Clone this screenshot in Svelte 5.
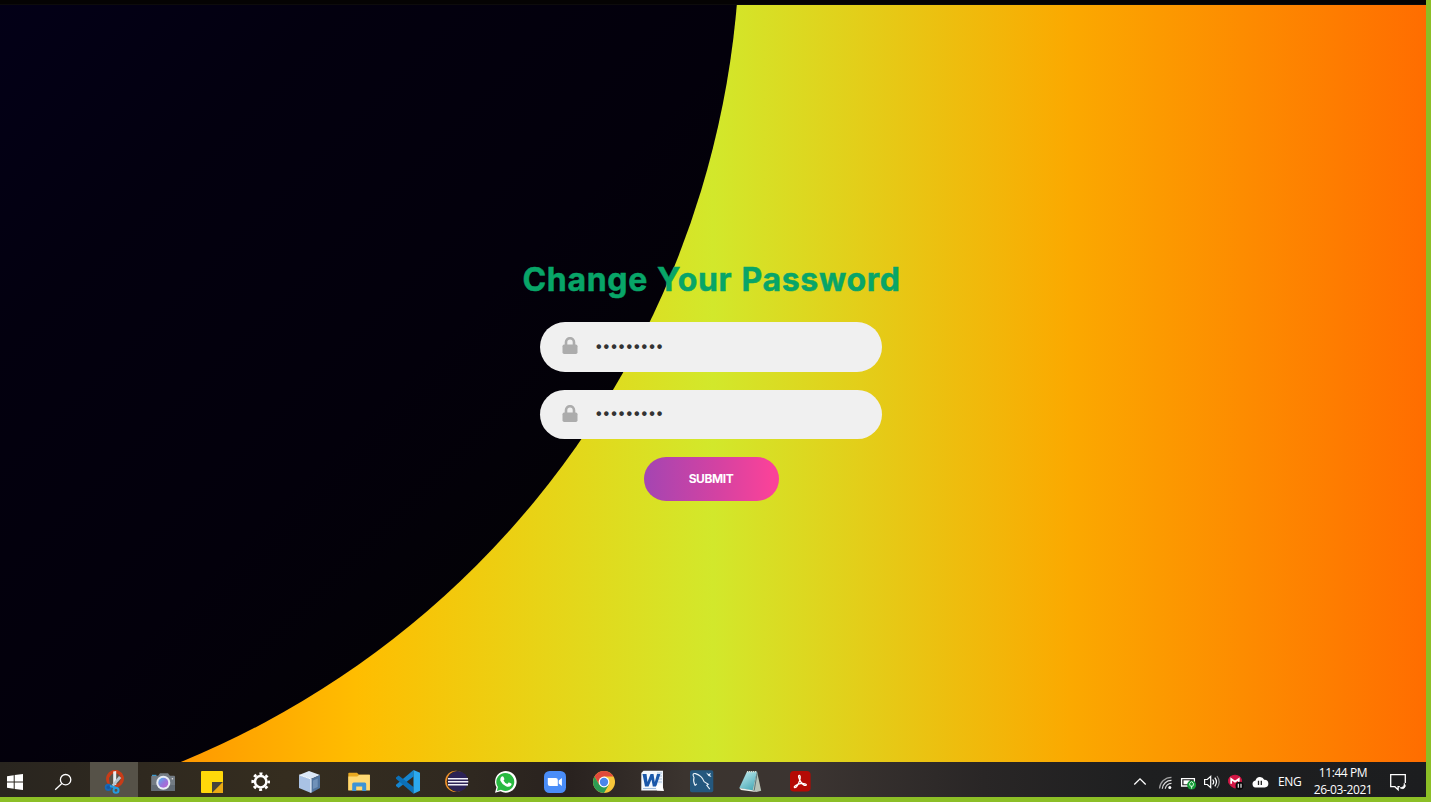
<script>
  let first = $state('password1');
  let second = $state('password1');
</script>

{#snippet lock()}
  <svg class="lock" width="16" height="18" viewBox="0 0 16 18"><rect x="0.5" y="7.5" width="15" height="9.5" rx="1.7" fill="#acacac" /><path d="M4 8V5.2a4 4 0 0 1 8 0V8" fill="none" stroke="#acacac" stroke-width="2.6" /></svg>
{/snippet}

<div class="screen">
  <div class="top"></div>
  <main>
    <div class="circle"></div>
    <form onsubmit={(e) => e.preventDefault()}>
      <h1>Change Your Password</h1>
      <label class="field">{@render lock()}<input type="password" bind:value={first} /></label>
      <label class="field">{@render lock()}<input type="password" bind:value={second} /></label>
      <button>SUBMIT</button>
    </form>
  </main>
  <footer>
    <div class="apps">
      <div class="app"><svg viewBox="0 0 25 24"><path fill="#fff" d="M4 6.3 10.7 5.3V11.5H4zM11.7 5.1 20 4V11.5H11.7zM4 12.6H10.7V18.8L4 17.8zM11.7 12.6H20V20L11.7 18.9z" /></svg></div>
      <div class="app"><svg viewBox="0 0 25 24" fill="none" stroke="#fff" stroke-width="1.3"><circle cx="13.6" cy="9.7" r="5.2" /><path d="M9.8 13.5 3.2 19.8" /></svg></div>
      <div class="app active"><svg viewBox="0 0 25 24"><ellipse cx="14" cy="8.8" rx="7.2" ry="7.3" fill="none" stroke="#c83c18" stroke-width="3.4" transform="rotate(25 14 8.8)" /><path d="M8 7.5h6v9h-5z" fill="#565248" /><path d="M12.2 1.5 15.2 1V15H12.2z" fill="#e8edf0" /><path d="m18 6 2.3 2-7.6 8.5-2-1.5z" fill="#b9c6cf" /><circle cx="7.3" cy="17.3" r="2.7" fill="#1557a3" stroke="#1768b5" stroke-width="1.8" /><circle cx="15" cy="20.3" r="2.5" fill="none" stroke="#249be0" stroke-width="2" /><path d="m9 16 5.5 1.5" stroke="#249be0" stroke-width="2" /></svg></div>
      <div class="app"><svg viewBox="0 0 25 24"><path d="M2 6V4.8h4.4V6z" fill="#2da3e4" /><path d="M8 6 10 3.2h8L20 6z" fill="#747c84" /><rect x="1.2" y="5.7" width="23.8" height="15.3" rx="1" fill="#737b83" /><path d="M1.2 15H25v6H1.2z" fill="#626b74" /><circle cx="13.3" cy="12.8" r="7" fill="#e9edf5" /><circle cx="13.3" cy="12.8" r="5" fill="url(#lens)" /><circle cx="22.4" cy="8.7" r=".8" fill="#e6e6e6" /><defs><linearGradient id="lens" x1="0" y1="0" x2="1" y2="1"><stop stop-color="#4db8ef" /><stop offset=".5" stop-color="#9277dc" /><stop offset="1" stop-color="#c35bd0" /></linearGradient></defs></svg></div>
      <div class="app"><svg viewBox="0 0 25 24"><path fill="#ffd80a" d="M3 1h20a1 1 0 0 1 1 1v10L13 23H3a1 1 0 0 1-1-1V2a1 1 0 0 1 1-1z" /><path d="M13 12h11L13 23z" fill="#46433c" /><path d="M24 12v11H13z" fill="#eaaa14" /></svg></div>
      <div class="app"><svg viewBox="0 0 25 24" fill="none" stroke="#fff"><circle cx="12.7" cy="11.7" r="5.7" stroke-width="2.5" /><circle cx="12.7" cy="11.7" r="8" stroke-width="2.6" stroke-dasharray="3 3.283" stroke-dashoffset="1.5" /></svg></div>
      <div class="app"><svg viewBox="0 0 25 24"><path d="M2 5 12 1l11 4-9 4z" fill="#dce9f8" /><path d="m2 5 12 4v14L2 18z" fill="#a9c2e4" /><path d="m14 9 9-4v13l-9 5z" fill="#50749e" /><path d="m2.5 5 11.5 4V22.5" stroke="#f4faff" fill="none" /><path d="m16 10.5 4.7-2v8.5L16 19z" fill="#6f91b8" /></svg></div>
      <div class="app"><svg viewBox="0 0 25 24"><path d="M2.3 3.5q0-.8.8-.8H11l2 2h10q.8 0 .8.8V20H2.3z" fill="#e9a921" /><path d="M2.3 6.5h9l2-1.8h10.6V20.5H2.3z" fill="#ffd973" /><path d="M6.2 21v-7q0-1.5 1.5-1.5h11q1.5 0 1.5 1.5v7h-4v-4.5h-6V21z" fill="#3d94d5" /></svg></div>
      <div class="app"><svg viewBox="0 0 25 24"><path d="M18.5 6.5 3.6 18 1 16.1v-1.4L18.5 0z" fill="#1585cf" /><path d="M18.5 17 3.6 5.6 1 7.4v1.4l17.5 15z" fill="#0b70b8" /><path d="M18.5 0 25 2.8v18l-6.5 3z" fill="#2ba9ef" /></svg></div>
      <div class="app"><svg viewBox="0 0 25 24"><circle cx="11.8" cy="11.4" r="10.7" fill="#f0912a" /><circle cx="13.2" cy="11.4" r="10.5" fill="#332c24" /><circle cx="14" cy="11.4" r="10.2" fill="#2c2255" /><path d="M4 8.7h20M4 11.7h20.3M4 14.7h20" stroke="#f1eff8" stroke-width="1.5" /></svg></div>
      <div class="app"><svg viewBox="0 0 25 24"><path d="M2 22.8 3.5 17.3A10.8 10.8 0 1 1 7.6 21.3z" fill="#fff" /><path d="m3.9 20.9 1-3.8a9 9 0 1 1 3 2.7z" fill="#29b941" /><path d="M8.4 6.8q1.4-1.2 2.2.2l.8 1.9q.1.5-.9 1.6 1.2 2.5 3.8 3.6l1.3-1.5q.4-.3 2.6 1 .8.6-.2 2-2 2-5 .7-4-1.8-5.6-5.5-.5-2.4 1-4z" fill="#fff" /></svg></div>
      <div class="app"><svg viewBox="0 0 25 24"><rect x="2" y="1" width="22" height="22" rx="5.5" fill="#4a8df8" /><path d="M5.8 8h8q2 0 2 2v6h-8q-2 0-2-2zM16.7 10.4l3.2-2.3v7.8l-3.2-2.3z" fill="#fff" /></svg></div>
      <div class="app"><svg viewBox="0 0 25 24"><circle cx="13" cy="12" r="11" fill="#f8c63a" /><path d="M3.5 6.5A11 11 0 0 1 22.5 6.5H13L8.2 14.8z" fill="#e0493b" /><path d="M3.5 6.5A11 11 0 0 0 13 23l4.8-8.3L13 12l-4.8 2.7z" fill="#2d9c54" /><circle cx="13" cy="12" r="5.4" fill="#fff" /><circle cx="13" cy="12" r="4.2" fill="#4a86ec" /></svg></div>
      <div class="app"><svg viewBox="0 0 25 24"><path d="M3.5.8H23V20.5H1.3V3z" fill="#f2f7fc" /><path d="M17 3h5M18 6h4M18 9h4M18 12h4M3 18.5h13" stroke="#a5bedc" /><path d="M2.5 4h4l1 8 3-8h3l1.3 8L17 4h3.4l-4.2 12.5h-3.4l-1.3-7-3 7H5z" fill="#1957a9" /><path d="m16 16 6-2 2 7-7-.5z" fill="#fff" /></svg></div>
      <div class="app"><svg viewBox="0 0 25 24"><rect x="1" y=".3" width="23.3" height="22" rx="1.8" fill="#24587e" /><path d="M6 15.5Q3.8 11 5 7.5 2.5 3 6.5 3.6q6.5 2 8.6 8l4.2 2.6-1.5 1.2 3 3.8M6 15.5l1.8-1.7" fill="none" stroke="#e8f2f8" stroke-width="1.1" /><path d="m17 2.5 2.5 1.6 2.5-1-1 2 1.5 2-3-1.2z" fill="#e8f2f8" /></svg></div>
      <div class="app"><svg viewBox="0 0 25 24"><path d="m19 1.5 4.2 19.3-4.8 1.2L14 20z" fill="#b7c3b7" /><path d="M9 1.5h10L14.5 20.8 1.3 18z" fill="url(#pad)" /><path d="M9 1.7h10" stroke="#d9d9cc" stroke-width="1.4" stroke-dasharray="1 1" /><path d="m1.3 18 13.2 2.2L18.4 22 3 20z" fill="#edf2ed" /><path d="m19 4-2.8 16.5" stroke="#5b777c" /><defs><linearGradient id="pad" x1="0" y1="0" x2=".6" y2="1"><stop stop-color="#c8eff2" /><stop offset="1" stop-color="#4eacb9" /></linearGradient></defs></svg></div>
      <div class="app"><svg viewBox="0 0 25 24"><rect x="3" y="1" width="20.6" height="20.6" rx="3.8" fill="#b50a05" /><path d="M12.6 5.5c-2-.5-.7 3.4 1.2 6.4 1.3 2.2 3.7 4.1 5.2 3.4 1.4-1.1-2.2-2.3-5.8-1.6-3.2.7-7.1 2.9-5.6 3.9 1.7.9 3.9-3.8 5-7 .7-2.5 1-4.8 0-5.1z" fill="none" stroke="#fff" stroke-width="1.3" /></svg></div>
    </div>
    <div class="tray">
      <svg viewBox="0 0 18 24" fill="none" stroke="#fff" stroke-width="1.3"><path d="m3.3 14.5 5.7-5.7 5.7 5.7" /></svg>
      <svg viewBox="0 0 18 24" fill="none" stroke="#dcdcdc" stroke-width="1.2"><path d="M4.5 18.5A12 12 0 0 1 16.5 7.3" stroke="#a2a2a2" /><path d="M7.3 18.7a9 9 0 0 1 9.2-8.3M10.3 18.8a6 6 0 0 1 6.2-5.4" /><circle cx="14.8" cy="17.6" r="1.5" fill="#fff" stroke="none" /></svg>
      <svg viewBox="0 0 18 24"><path d="M2.6 8.6h12.8v7.4H2.6z" fill="none" stroke="#fff" stroke-width="1.3" /><path d="M4.5 10.3h6.3v4H4.5z" fill="#fff" /><circle cx="12.6" cy="15" r="4.5" fill="#159b37" /><path d="M12.6 18.7v-3M10.5 13.7l2.1-2.2 2 2.2q0 2.8-2 2.8t-2.1-2.8z" fill="none" stroke="#e3ffe6" stroke-width=".9" /></svg>
      <svg viewBox="0 0 18 24" fill="none" stroke="#fff" stroke-width="1.2"><path d="M1.6 9.5h2.7l3.4-3.2v11.4l-3.4-3.2H1.6zM9.7 9.5q2 2.5 0 5M11.8 7.7q3.3 4.3 0 8.6" /><path d="M14 6q4.4 6 0 12" stroke="#929292" /></svg>
      <svg viewBox="0 0 18 24"><path d="M3.5 6.5Q8 3.8 12.5 6.5 15.5 9 14.2 13 12 17 8 18 4 17 1.8 13 .5 9 3.5 6.5z" fill="#d31645" stroke="#d31645" stroke-linejoin="round" /><path d="M4.2 13.8V9L8 11.8 11.8 9v4" fill="none" stroke="#fff" stroke-width="1.7" /><circle cx="12.5" cy="15.8" r="4" fill="#080808" /><path d="M11.3 13.8v4M14 13.8v4" stroke="#fff" stroke-width="1.1" /></svg>
      <svg viewBox="0 0 18 24"><path d="M4.5 17.5a3.6 3.6 0 0 1 0-7.1 4.7 4.7 0 0 1 8.7-.7 3.9 3.9 0 0 1 .5 7.8z" fill="#fff" /><path d="M7.5 10.7v4.3M10.3 10.7v4.3" stroke="#222" stroke-width="1.3" /></svg>
      <span class="lang">ENG</span>
      <div class="clock"><span>11:44 PM</span><span>26-03-2021</span></div>
      <svg class="note" viewBox="0 0 18 24" fill="none" stroke="#fff" stroke-width="1.3"><path d="M16.3 13V4.7H1.7v12h4.2l3.2 3v-3h1.7" /><path d="M15.2 13.2q2.5 3-.1 5-2 1.2-4-.4 4.4-.5 4.1-4.6z" fill="#fff" stroke-width=".6" /></svg>
    </div>
  </footer>
</div>

<style>
  :global(body) { margin: 0; overflow: hidden; }
  .screen { box-sizing: border-box; width: 1431px; height: 802px; padding: 0 5px 5px 0; background: #8cbf26; display: flex; flex-direction: column; overflow: hidden; }
  .top { height: 5px; flex: none; box-sizing: border-box; background: #050303; border-bottom: 1px solid #0d0b0b; }
  main { height: 757px; flex: none; position: relative; overflow: hidden; display: flex; justify-content: center; background: linear-gradient(90deg, #ff7300 0, #ffbd00 25%, #d2e82b 50%, #fba900 75%, #ff6d00 100%); }
  .circle { position: absolute; left: -1060px; top: -976px; width: 1800px; height: 1800px; border-radius: 50%; background: linear-gradient(135deg, #03001a 50%, #030016 58%, #03000f 66%, #03000b 78%, #030205 88%); }
  form { position: relative; width: 400px; margin-left: -4px; padding-top: 256px; display: flex; flex-direction: column; align-items: center; }
  h1 { margin: 0 -1px 12px 0; height: 49px; font: 700 32px/38px Inter, sans-serif; color: #08a568; letter-spacing: 0.7px; word-spacing: 0.8px; -webkit-text-stroke: 0.5px #08a568; white-space: nowrap; }
  .field { box-sizing: border-box; width: 342px; height: 49.5px; margin-bottom: 18px; padding-left: 22px; border-radius: 25px; background: #f0f0f0; display: flex; align-items: center; }
  .lock { flex: none; margin-right: 18px; margin-bottom: 1px; }
  input { width: 230px; border: 0; padding: 0; outline: 0; background: none; color: #333; font: 600 16px "Liberation Sans", sans-serif; letter-spacing: 2px; }
  button { width: 135px; height: 44px; border: 0; padding: 0 0 1px; border-radius: 22px; background: linear-gradient(90deg, #a445b2, #d442a2 55%, #fa4299 95%); color: #fff; font: 700 12px Inter, sans-serif; letter-spacing: -.4px; }
  footer { height: 35px; flex: none; display: flex; justify-content: space-between; overflow: hidden; color: #fff; background: linear-gradient(90deg, #29251f 0, #352d1f 20%, #302920 32%, #29221f 40%, #3b342f 48%, #3b3431 57%, #292626 69%, #1e1f20 80%, #1c1d1f 100%); }
  .apps { display: flex; margin-left: -9px; }
  .app { width: 49px; height: 35px; flex: none; display: flex; justify-content: center; padding-top: 8px; box-sizing: border-box; }
  .app svg { width: 25px; height: 24px; }
  .active { background: linear-gradient(90deg, transparent 1px, #565248 1px); }
  .tray { display: flex; align-items: flex-start; gap: 6px; width: 295px; font: 12px/18px "Open Sans", sans-serif; }
  .tray svg { width: 18px; height: 24px; margin-top: 8px; flex: none; }
  .lang { margin: 11px 0 0 3px; width: 23px; flex: none; letter-spacing: -.3px; }
  .clock { width: 60px; margin: 4px 0 0 6px; flex: none; display: flex; flex-direction: column; align-items: center; gap: 3px; line-height: 14px; letter-spacing: -.4px; white-space: nowrap; }
  .tray .note { margin-left: 10px; }
</style>
